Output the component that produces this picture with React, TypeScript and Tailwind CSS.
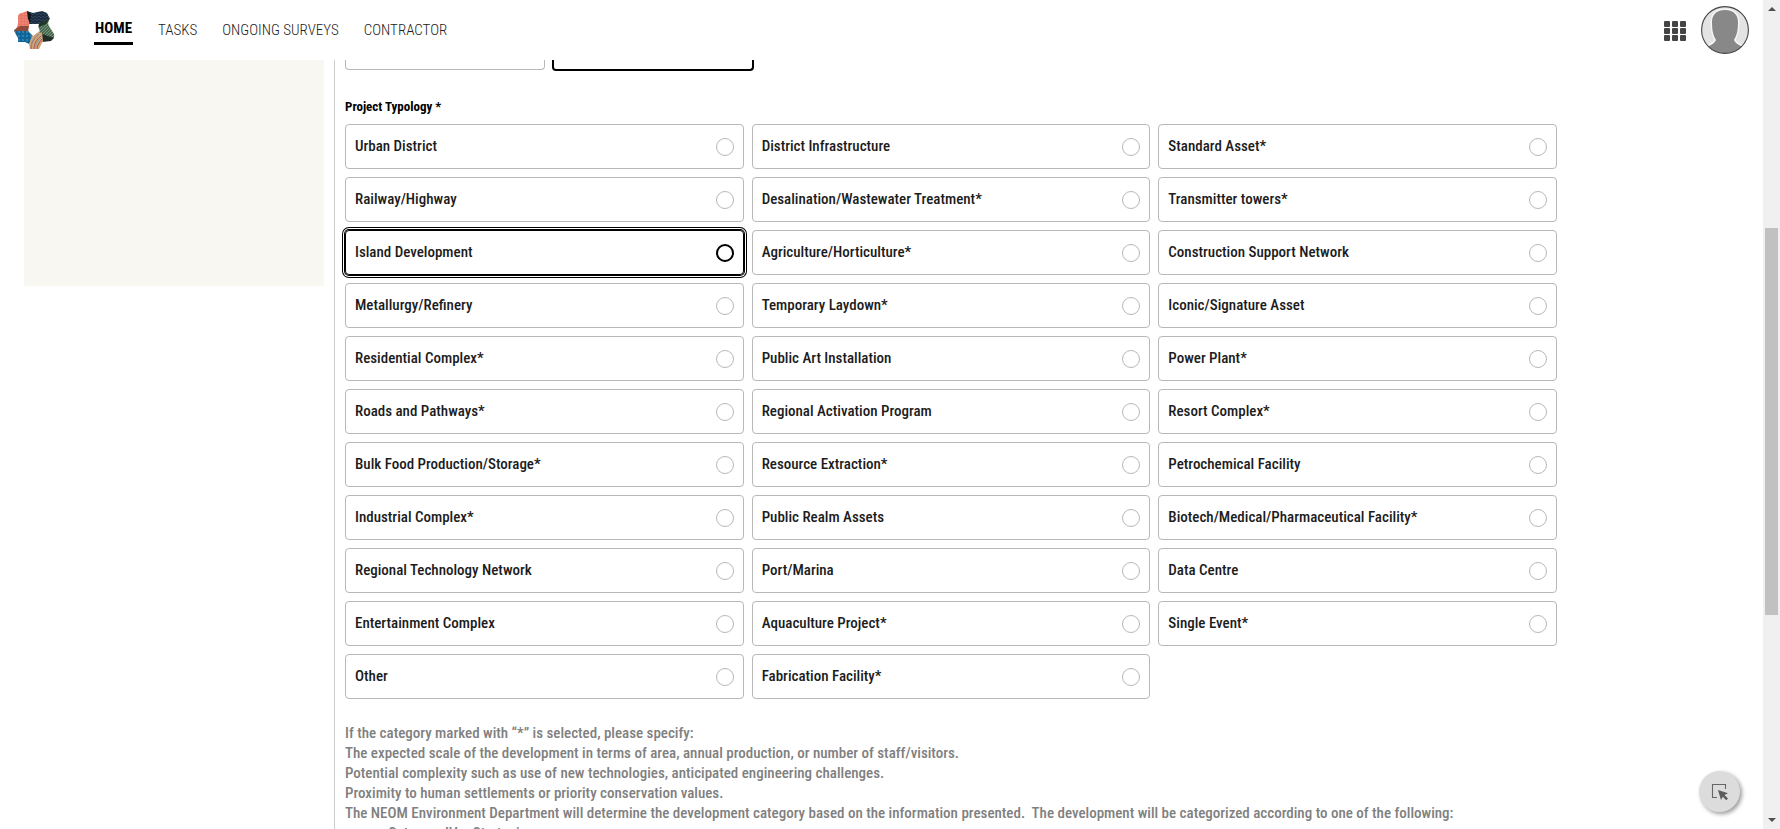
import React, { useState } from "react";

const typologies: string[] = [
  "Urban District", "District Infrastructure", "Standard Asset*",
  "Railway/Highway", "Desalination/Wastewater Treatment*", "Transmitter towers*",
  "Island Development", "Agriculture/Horticulture*", "Construction Support Network",
  "Metallurgy/Refinery", "Temporary Laydown*", "Iconic/Signature Asset",
  "Residential Complex*", "Public Art Installation", "Power Plant*",
  "Roads and Pathways*", "Regional Activation Program", "Resort Complex*",
  "Bulk Food Production/Storage*", "Resource Extraction*", "Petrochemical Facility",
  "Industrial Complex*", "Public Realm Assets", "Biotech/Medical/Pharmaceutical Facility*",
  "Regional Technology Network", "Port/Marina", "Data Centre",
  "Entertainment Complex", "Aquaculture Project*", "Single Event*",
  "Other", "Fabrication Facility*",
];

const navItems = ["HOME", "TASKS", "ONGOING SURVEYS", "CONTRACTOR"];

const notes = [
  "If the category marked with “*” is selected, please specify:",
  "The expected scale of the development in terms of area, annual production, or number of staff/visitors.",
  "Potential complexity such as use of new technologies, anticipated engineering challenges.",
  "Proximity to human settlements or priority conservation values.",
  "The NEOM Environment Department will determine the development category based on the information presented.\u00a0 The development will be categorized according to one of the following:",
];

function Logo() {
  return (
    <svg viewBox="0 0 42 40" className="h-10 w-[42px]" aria-hidden="true">
      <defs>
        <pattern id="coral" width="3" height="3" patternUnits="userSpaceOnUse">
          <rect width="3" height="3" fill="#e87865" />
          <circle cx="1" cy="1" r=".6" fill="#f4b0a2" />
        </pattern>
        <pattern id="navy" width="4" height="3" patternUnits="userSpaceOnUse">
          <rect width="4" height="3" fill="#1b2a3d" />
          <path d="M0 2L2 0L4 2" fill="none" stroke="#36526b" strokeWidth=".7" />
        </pattern>
        <pattern id="green" width="3" height="3" patternUnits="userSpaceOnUse">
          <rect width="3" height="3" fill="#48694f" />
          <path d="M0 3L3 0" stroke="#85a586" strokeWidth=".8" />
        </pattern>
        <pattern id="blue" width="4" height="4" patternUnits="userSpaceOnUse">
          <rect width="4" height="4" fill="#0f6598" />
          <circle cx="2" cy="2" r=".7" fill="#70b4d8" />
        </pattern>
      </defs>
      <path d="M5 7Q5 3 9 3L14 1L18 4L16 16L12 22L1 21Q6 17 5 7Z" fill="url(#coral)" />
      <path d="M1 20L7 16L16 16L15 22L2 22Z" fill="#8d4a3d" />
      <path d="M14 1L20 3L29 1L34 3L37 9L30 12L26 14L16 14L17 6Z" fill="url(#navy)" />
      <path d="M14 1L18 4L17 13L15 9Z" fill="#10151d" />
      <path d="M37 8Q34 13 36 16L41 24Q42 28 39 29L29 31L26 23L25 14Z" fill="url(#green)" />
      <path d="M37 8L25 14L26 17L33 14Z" fill="#22352c" />
      <path d="M1 21L15 21L20 24L21 28L16 34L12 32L5 32L5 28Z" fill="url(#blue)" />
      <path d="M26 23L41 28L38 31L29 32Z" fill="#202c26" />
      <path d="M19 26L25 22L29 23L30 31L26 39H17L16 34Z" fill="#cfa678" />
      <path d="M18 39C18 33 21 28 26 24M21 39C21 34 24 29 28 26M24 39C24 35 27 32 29 29" fill="none" stroke="#b0504c" strokeWidth="1" />
      <path d="M18 36C19 31 22 27 26 24M22 38C23 33 26 30 28 28" fill="none" stroke="#7c9cb4" strokeWidth=".8" />
      <path d="M18 14L26 14L25 17L27 21L25 22L20 26L16 22L16 17Z" fill="white" />
    </svg>
  );
}

function Avatar() {
  return (
    <svg viewBox="0 0 48 48" className="size-12" aria-hidden="true">
      <defs>
        <clipPath id="avatar-clip"><circle cx="24" cy="24" r="23.2" /></clipPath>
      </defs>
      <circle cx="24" cy="24" r="23.3" fill="#e3e3e3" />
      <g clipPath="url(#avatar-clip)">
        <path d="M24 4C15 4 11 9 11 16C11 24 12 29 15 34C14 37 10 39 6 41V50H42V41C38 39 34 37 33 34C36 29 37 24 37 16C37 9 33 4 24 4Z" fill="#888" stroke="#f6f6f6" strokeWidth="3" paintOrder="stroke" />
      </g>
      <circle cx="24" cy="24" r="23.4" fill="none" stroke="#444" strokeWidth="1.1" />
    </svg>
  );
}

function AppsIcon() {
  return (
    <svg viewBox="0 0 22 20" className="mt-0.5 h-5 w-[22px]" fill="#444" aria-hidden="true">
      {[0, 7, 14].map((y) =>
        [0, 8, 16].map((x) => <rect key={`${x}-${y}`} x={x} y={y} width="6" height="6" rx="1" />),
      )}
    </svg>
  );
}

function Header() {
  return (
    <header className="z-10 flex h-[60px] shrink-0 items-center justify-between bg-white pr-3.5 pl-[13px]">
      <div className="flex items-center">
        <a href="#" aria-label="Main page"><Logo /></a>
        <nav className="ml-[39px] flex items-center gap-[25px] font-['Roboto_Condensed','Roboto',sans-serif] text-[15px] leading-5 text-[#222]">
          {navItems.map((item, i) => (
            <a
              key={item}
              href="#"
              className={i === 0 ? "border-b-3 border-black px-px pt-0.5 pb-1 font-bold text-black" : "pb-px font-light"}
            >
              {item}
            </a>
          ))}
        </nav>
      </div>
      <div className="flex items-center gap-[15px]">
        <button type="button" aria-label="Applications"><AppsIcon /></button>
        <button type="button" aria-label="Profile"><Avatar /></button>
      </div>
    </header>
  );
}

function Typology({ name, checked, onSelect }: { name: string; checked: boolean; onSelect: () => void }) {
  return (
    <label
      className={
        "flex h-[45px] cursor-pointer items-center justify-between rounded-[4px] border px-[9px] " +
        (checked
          ? "border-black shadow-[0_0_0_1px_#000,0_0_0_2px_#fff,0_0_0_3px_#000]"
          : "border-[#b8b8b8]")
      }
    >
      <span className="pb-px">{name}</span>
      <input
        type="radio"
        name="typology"
        checked={checked}
        onChange={onSelect}
        className="size-[18px] appearance-none rounded-full border border-[#b8b8b8] checked:border-2 checked:border-black"
      />
    </label>
  );
}

function Scrollbar() {
  return (
    <div className="flex w-[17px] shrink-0 flex-col items-center justify-between bg-[#f0f0f0] py-[7px]" aria-hidden="true">
      <svg viewBox="0 0 8 4" className="h-1 w-2"><path d="M0 4L4 0L8 4Z" fill="#505050" /></svg>
      <div className="flex w-full flex-1 flex-col px-0.5">
        <div className="grow-[217]" />
        <div className="grow-[387] bg-[#c1c1c1]" />
        <div className="grow-[203]" />
      </div>
      <svg viewBox="0 0 8 4" className="h-1 w-2"><path d="M0 0L4 4L8 0Z" fill="#505050" /></svg>
    </div>
  );
}

export default function App() {
  const [selected, setSelected] = useState("Island Development");
  return (
    <div className="flex h-screen overflow-hidden bg-white font-['Roboto_Condensed','Roboto',sans-serif] text-[#1c1c1c]">
      <div className="flex min-w-0 flex-1 flex-col">
        <Header />
        <div className="flex min-h-0 flex-1 overflow-hidden pl-6">
          <aside className="h-[226px] w-[300px] shrink-0 bg-[#f8f7f2]" />
          <main className="ml-2.5 min-w-0 flex-1 border-l border-[#ccc] pr-[206px] pl-[10px]">
            <div className="flex gap-[7px]">
              <div className="h-2.5 w-[200px] rounded-b-[4px] border border-t-0 border-[#b8b8b8]" />
              <div className="h-[11px] w-[202px] rounded-b-[4px] border-2 border-t-0 border-black" />
            </div>
            <fieldset className="mt-[27px]">
              <legend className="mb-2 text-[13px] leading-[18px] font-bold text-black">
                Project Typology *
              </legend>
              <div className="grid grid-cols-3 gap-2 text-[15px] leading-5 font-medium">
                {typologies.map((name) => (
                  <Typology key={name} name={name} checked={selected === name} onSelect={() => setSelected(name)} />
                ))}
              </div>
            </fieldset>
            <div className="mt-6 text-[15px] leading-5 font-medium whitespace-nowrap text-[#808080]">
              {notes.map((line) => <p key={line}>{line}</p>)}
              <ul className="pl-[43px]"><li>Category IV – Strategic</li></ul>
            </div>
          </main>
        </div>
      </div>
      <Scrollbar />
      <button
        type="button"
        aria-label="Select element"
        className="fixed right-10 bottom-[17px] flex size-[41px] items-center justify-center rounded-full bg-[#dcdcdc] shadow-[2px_2px_4px_rgba(0,0,0,0.4)]"
      >
        <svg viewBox="0 0 18 18" className="size-[18px]" aria-hidden="true">
          <path d="M6 14.500H1.500V1.500H14.500V6" fill="none" stroke="#666" strokeWidth="1.100" />
          <path d="M7 7L17 10.200L13.500 12L17 15.500L15.200 17.200L11.800 13.700L10 17Z" fill="#5c5c5c" />
        </svg>
      </button>
    </div>
  );
}
